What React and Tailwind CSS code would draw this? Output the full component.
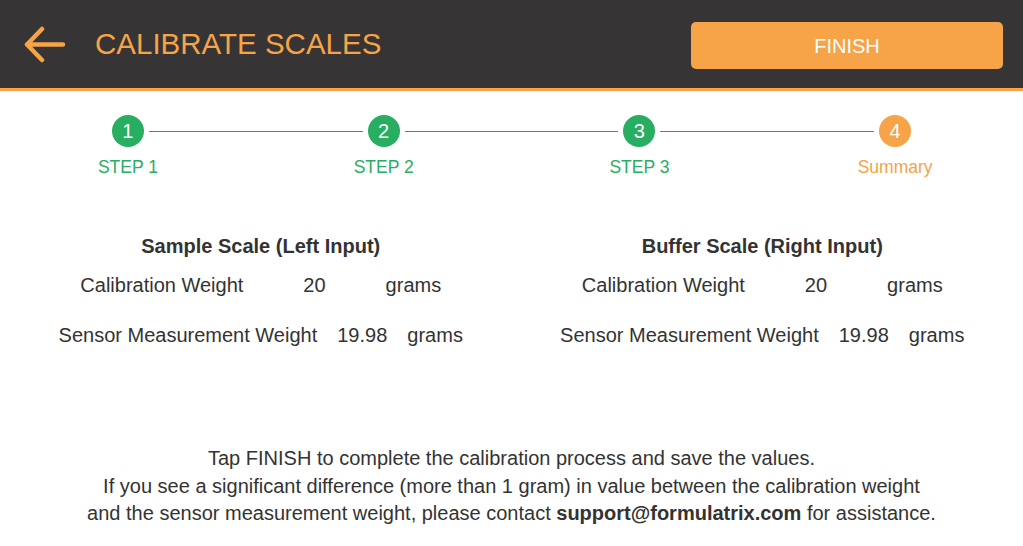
import React from "react";

const steps = [
  { n: 1, label: "STEP 1", done: true },
  { n: 2, label: "STEP 2", done: true },
  { n: 3, label: "STEP 3", done: true },
  { n: 4, label: "Summary", done: false },
];

const scales = [
  {
    title: "Sample Scale (Left Input)",
    calibration: "20",
    measured: "19.98",
  },
  {
    title: "Buffer Scale (Right Input)",
    calibration: "20",
    measured: "19.98",
  },
];

const BackArrow = () => (
  <svg width="42" height="38" viewBox="0 0 42 38" fill="none">
    <path
      d="M3 18.5 H39 M3 18.5 L18 3 M3 18.5 L18 34"
      stroke="#f7a347"
      strokeWidth="4.5"
      strokeLinecap="round"
      strokeLinejoin="round"
    />
  </svg>
);

export default function App() {
  return (
    <div
      className="w-[1023px] h-[546px] bg-white text-[#333333] overflow-hidden"
      style={{ fontFamily: '"Liberation Sans", Arial, sans-serif' }}
    >
      {/* Header */}
      <header className="h-[91px] bg-[#363435] border-b-[3px] border-[#f7a347] flex items-center">
        <button className="ml-[24px] mt-[1px] flex items-center">
          <BackArrow />
        </button>
        <h1 className="ml-[29px] text-[29.5px] leading-none text-[#f7a347]">
          CALIBRATE SCALES
        </h1>
        <button className="ml-auto mr-[20px] mt-[3px] w-[312px] h-[47px] rounded-[5px] bg-[#f7a347] text-white text-[20px]">
          FINISH
        </button>
      </header>

      {/* Stepper */}
      <div className="grid grid-cols-4 mt-[24px]">
        {steps.map((s, i) => {
          const color = s.done ? "bg-[#27ae60]" : "bg-[#f7a347]";
          const text = s.done ? "text-[#27ae60]" : "text-[#f7a347]";
          return (
            <div key={s.n} className="flex flex-col items-center">
              <div className="flex items-center w-full">
                <div
                  className={
                    i === 0
                      ? "flex-1 h-px mr-[5px]"
                      : "flex-1 h-px mr-[5px] bg-[#2f9d5c]"
                  }
                />
                <div
                  className={`w-[32px] h-[32px] rounded-full ${color} text-white text-[20px] flex items-center justify-center`}
                >
                  {s.n}
                </div>
                <div
                  className={
                    i === steps.length - 1
                      ? "flex-1 h-px ml-[5px]"
                      : "flex-1 h-px ml-[5px] bg-[#2f9d5c]"
                  }
                />
              </div>
              <div className={`mt-[10px] text-[17.5px] leading-[20px] ${text}`}>
                {s.label}
              </div>
            </div>
          );
        })}
      </div>

      {/* Scales */}
      <div className="flex px-[10px] mt-[57px]">
        {scales.map((sc) => (
          <div key={sc.title} className="flex-1 flex flex-col items-center text-[20px]">
            <h2 className="font-bold leading-6">{sc.title}</h2>
            <div className="mt-[15px] flex justify-center gap-[60px] leading-6">
              <span>Calibration Weight</span>
              <span>{sc.calibration}</span>
              <span>grams</span>
            </div>
            <div className="mt-[26px] flex justify-center gap-[20px] leading-6">
              <span>Sensor Measurement Weight</span>
              <span>{sc.measured}</span>
              <span>grams</span>
            </div>
          </div>
        ))}
      </div>

      {/* Notes */}
      <div className="mt-[98px] text-center text-[20px] leading-[27.5px]">
        <p>Tap FINISH to complete the calibration process and save the values.</p>
        <p>
          If you see a significant difference (more than 1 gram) in value between the
          calibration weight
        </p>
        <p>
          and the sensor measurement weight, please contact{" "}
          <span className="font-bold">support@formulatrix.com</span> for assistance.
        </p>
      </div>
    </div>
  );
}
